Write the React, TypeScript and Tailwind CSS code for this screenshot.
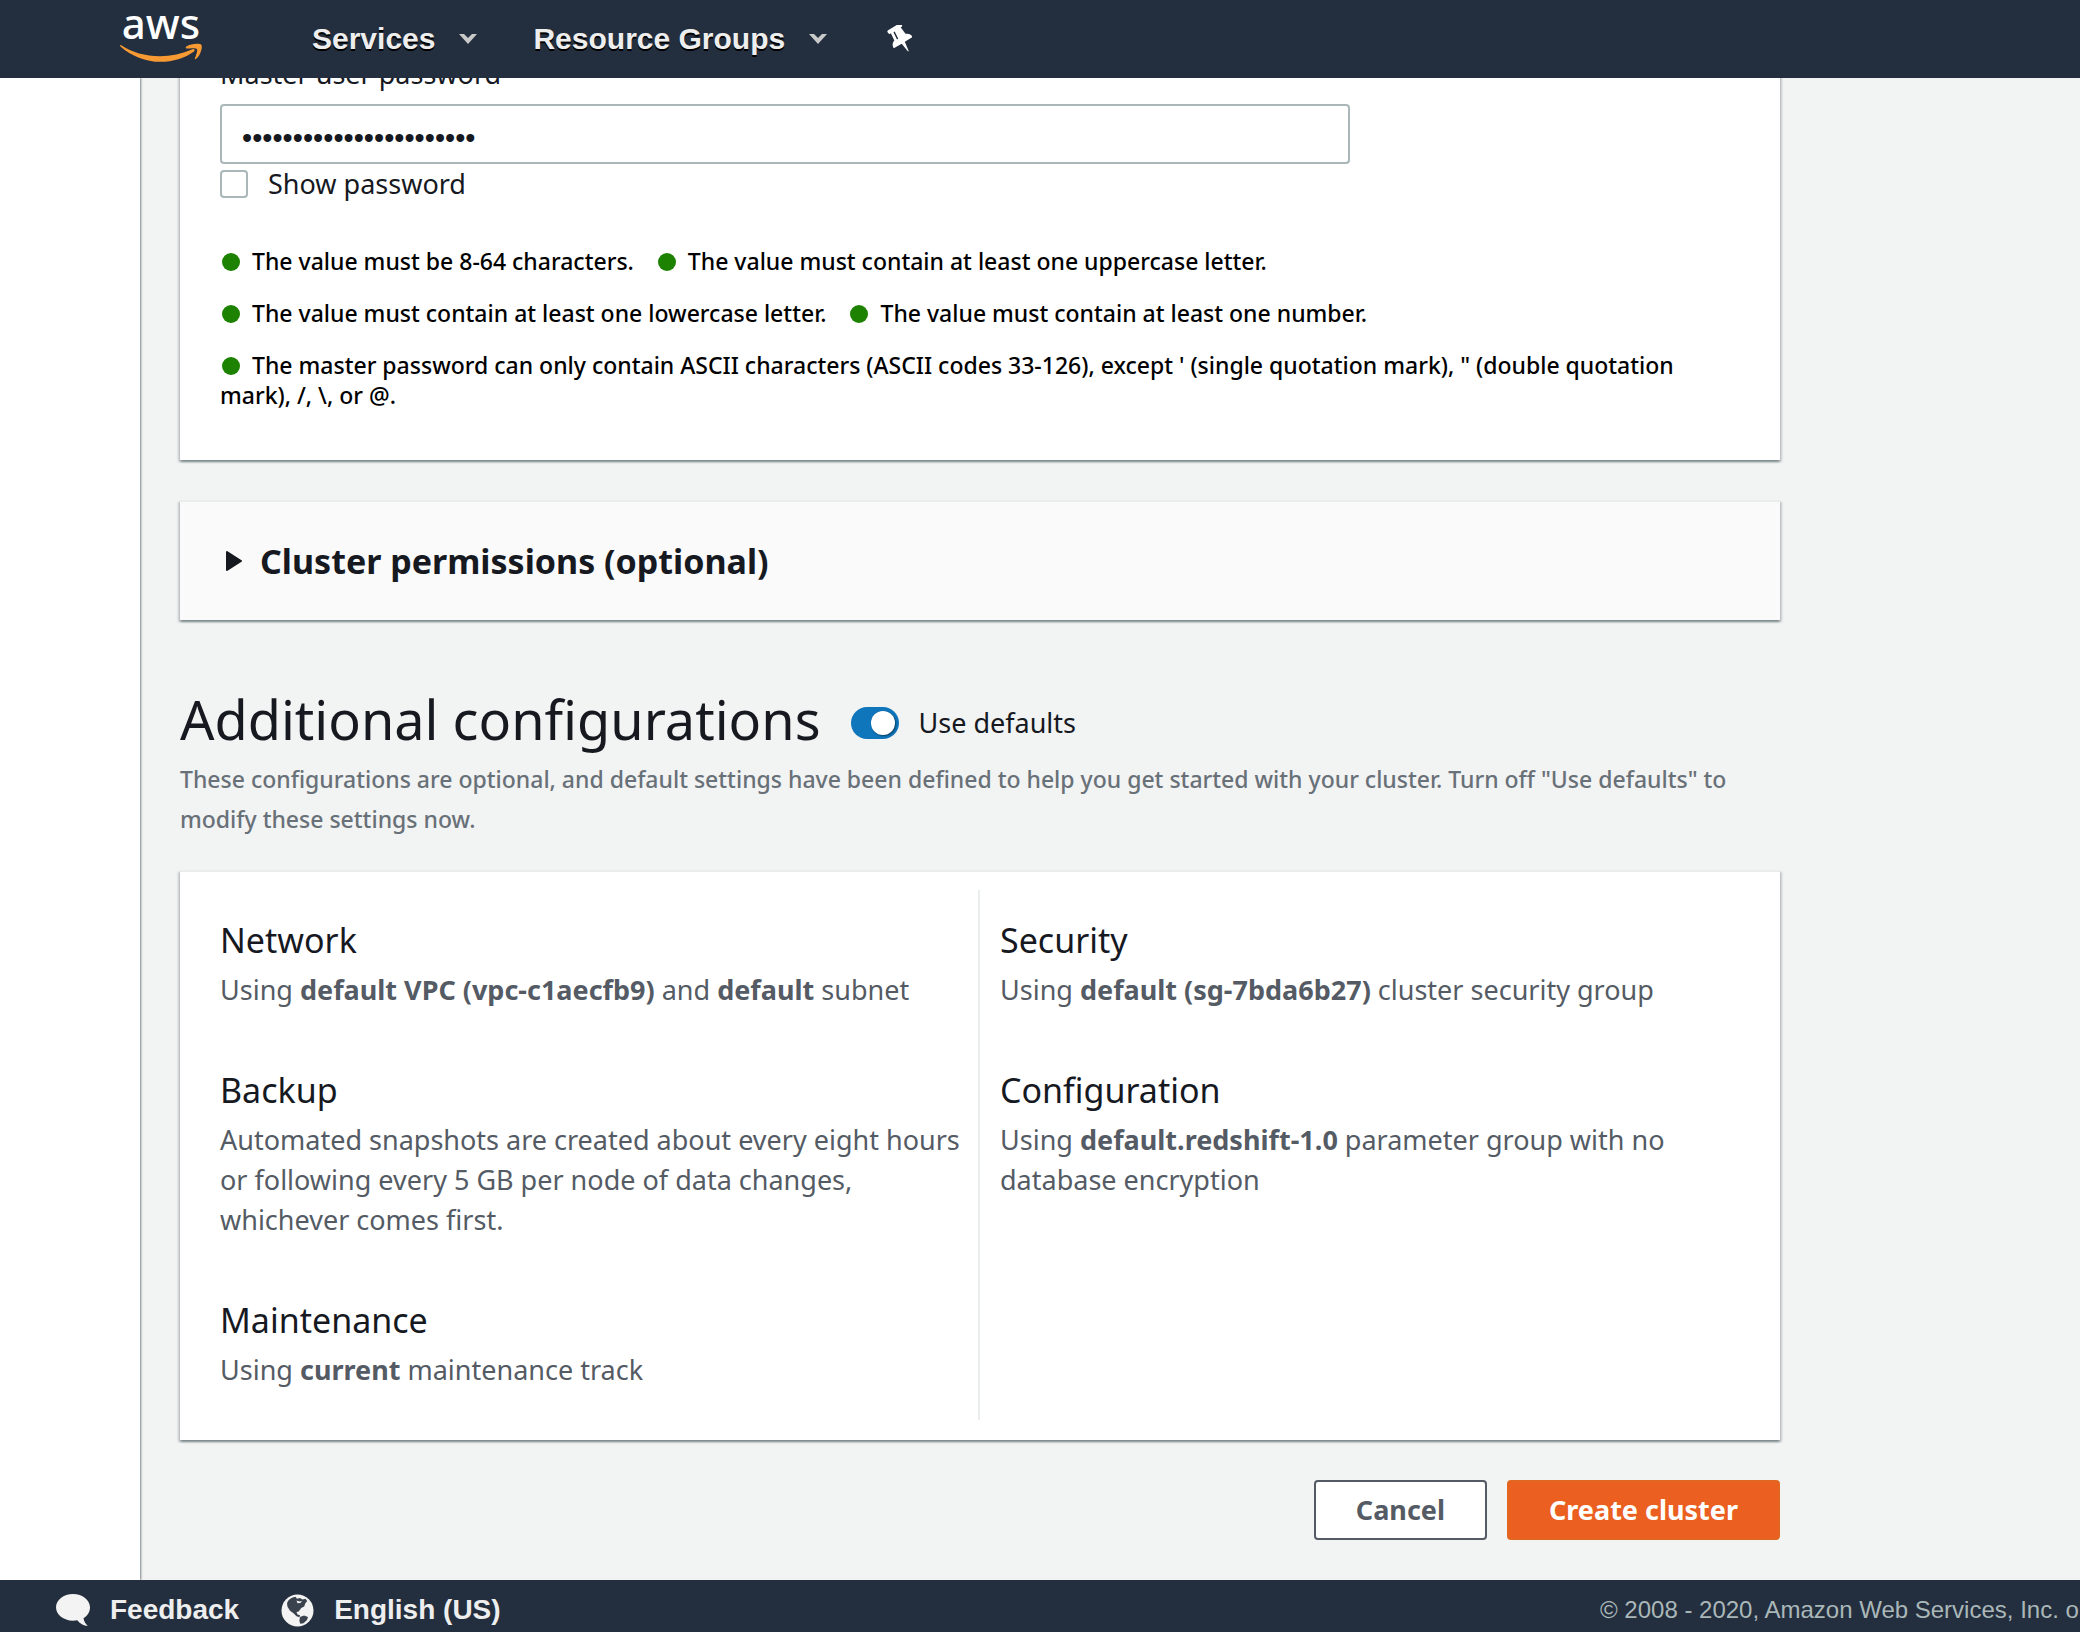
import { useState } from "react";
import type { ReactNode } from "react";

const cardShadow =
  "shadow-[0_2px_2px_0_rgba(0,28,36,0.3),2px_2px_2px_0_rgba(0,28,36,0.15),-2px_2px_2px_0_rgba(0,28,36,0.15)]";

const criteria = [
  "The value must be 8-64 characters.",
  "The value must contain at least one uppercase letter.",
  "The value must contain at least one lowercase letter.",
  "The value must contain at least one number.",
  "The master password can only contain ASCII characters (ASCII codes 33-126), except ' (single quotation mark), \" (double quotation mark), /, \\, or @.",
];

function AwsLogo() {
  return (
    <a href="#home" className="flex w-[82px] flex-col items-center pb-3 font-['Noto_Sans',sans-serif]">
      <span className="text-[42px] leading-10 font-medium text-white">aws</span>
      <svg viewBox="0 0 82 20" className="h-5 w-full" fill="#f79a33" aria-hidden="true">
        <path d="M1.2 2.2C12 9.200 25 13.200 40 13.200c11 0 22-2.600 32.500-7 1.700-.7 3 1 1.500 2.200C65 15 52.500 18.800 40.500 18.800 25.500 18.800 11.500 13 .4 3.400c-.7-.7-.2-1.700.8-1.200z" />
        <path d="M66.300 3.500C70.500.6 79.800.1 81.300 1.800c1.500 2-.5 10-5.200 14-.9.7-1.500.3-1.200-.6 1.200-3 3-7.900 2-9.200-1-1.300-6.400-.7-9.600-.4-1.400.2-2.200-1.200-1-2.100z" />
      </svg>
    </a>
  );
}

function Chevron() {
  return (
    <svg viewBox="0 0 18 10" className="h-2.5 w-[18px]" fill="#c9c9c9" aria-hidden="true">
      <path d="M0 0h5l4 4 4-4h5L9 10z" />
    </svg>
  );
}

function Pin() {
  return (
    <svg viewBox="0 0 25 28" className="h-7 w-[25px]" aria-hidden="true">
      <g transform="translate(8 4) rotate(-31)">
        <path
          fill="#fff"
          d="M-6.500-2.500h13c1 0 1.500.6 1.500 1.500v1c0 1-.5 1.500-1.500 1.500H5.700L6.500 9.500c2.600 1 4.200 2.600 4.500 5.500 0 .6-.3 1-1 1H1.800L.4 26h-.8L-1.800 16H-10c-.7 0-1-.4-1-1 .3-2.900 1.900-4.500 4.500-5.500l.8-8h-.8C-7.500 1.500-8 1-8 0v-1c0-.9.500-1.500 1.500-1.500z"
        />
        <path d="M-2.300 2.500l-.6 7" stroke="#232f3e" strokeWidth="1.400" strokeLinecap="round" />
      </g>
    </svg>
  );
}

function Bubble() {
  return (
    <svg viewBox="0 0 34 33" className="h-[33px] w-[34px]" fill="#f3f3f3" aria-hidden="true">
      <path d="M17 0c9.500 0 17 6 17 13.300 0 4.700-2.700 8.700-6.500 11 .5 3 2 5.700 4.300 7.700-4.300-.3-8-2.300-10.500-5.700-1.400.3-2.800.4-4.300.4C7.500 26.700 0 20.700 0 13.300 0 6 7.500 0 17 0z" />
    </svg>
  );
}

function Globe() {
  return (
    <svg viewBox="0 0 33 33" className="h-[33px] w-[33px]" aria-hidden="true">
      <circle cx="16.500" cy="16.500" r="16" fill="#f3f3f3" />
      <path
        fill="#3a424d"
        d="M7 7c2-2.500 5-4 7.500-4.200l1.500 2 3-.8 2.500 1.500 3-.7 1.700 2.200-2 2.500-1 3-3 1.500-2.500 3.500-2.200.5 1 2.500 2.500.8-.5 2-3-1-3-3-3.500-2.500-2.500-4-.5-3.500z"
      />
      <path fill="#3a424d" d="M19 23l4-1.500 4 1.500-1 3-3.500 3.300-3.300.5-.8-3z" />
      <path fill="#f3f3f3" d="M15.500 6.500l3 1 2.500-.5-1.500 2-3 .3z" />
    </svg>
  );
}

function Summary({ title, children }: { title: string; children: ReactNode }) {
  return (
    <section>
      <h3 className="text-[34px] leading-10 text-[#16191f]">{title}</h3>
      <p className="mt-2.5 leading-10 text-[#545b64]">{children}</p>
    </section>
  );
}

export default function App() {
  const [password, setPassword] = useState("Abcdefgh1234567890Abcde");
  const [show, setShow] = useState(false);
  const [defaults, setDefaults] = useState(true);

  return (
    <div className="flex min-h-screen flex-col overflow-hidden bg-[#f2f3f3] font-['Noto_Sans',sans-serif] text-[27px] text-[#16191f]">
      <header className="z-10 flex h-[78px] shrink-0 items-center bg-[#232f3e] pl-[120px] font-['Liberation_Sans',Arial,sans-serif] text-[30px] font-bold text-[#eee]">
        <AwsLogo />
        <nav className="ml-[110px] flex items-center gap-14">
          <button type="button" className="flex items-center gap-6 leading-10 [text-shadow:0_2px_0_#000]">
            Services
            <Chevron />
          </button>
          <button type="button" className="flex items-center gap-6 leading-10 [text-shadow:0_2px_0_#000]">
            Resource Groups
            <Chevron />
          </button>
          <button type="button" aria-label="Pin shortcuts" className="ml-1">
            <Pin />
          </button>
        </nav>
      </header>

      <div className="flex flex-1 overflow-hidden">
        <aside className="w-[140px] shrink-0 bg-white shadow-[1px_0_2px_0_rgba(0,28,36,0.5)]" />

        <main className="max-w-[1640px] flex-1 pb-10 pl-10">
          <section className={`bg-white px-10 pb-[50px] ${cardShadow}`}>
            <label htmlFor="password" className="-mt-6 block leading-10">
              Master user password
            </label>
            <input
              id="password"
              type={show ? "text" : "password"}
              value={password}
              onChange={(e) => setPassword(e.target.value)}
              className="mt-2.5 block h-[60px] w-full max-w-[1130px] rounded-sm border-2 border-[#aab7b8] bg-white px-5 pt-2 font-['Liberation_Sans',Arial,sans-serif] text-[29px] outline-none"
            />
            <label className="flex w-fit items-center gap-5 leading-10">
              <input
                type="checkbox"
                checked={show}
                onChange={(e) => setShow(e.target.checked)}
                className="size-7 appearance-none rounded-sm border-2 border-[#aab7b8] bg-white checked:bg-[#0073bb]"
              />
              Show password
            </label>
            <ul className="mt-[42px] flex max-w-[1490px] flex-wrap gap-x-[22px] gap-y-[22px] text-[23px] leading-[30px] font-medium text-black">
              {criteria.map((c) => (
                <li key={c}>
                  <span className="mr-3 ml-0.5 inline-block size-[18px] rounded-full bg-[#1d8102] align-[-1px]" />
                  {c}
                </li>
              ))}
            </ul>
          </section>

          <section className={`mt-10 border-t-2 border-[#eaeded] bg-[#fafafa] px-10 py-[39px] ${cardShadow}`}>
            <h2>
              <button type="button" aria-expanded="false" className="flex items-center text-[34px] leading-10 font-bold">
                <svg viewBox="0 0 20 20" className="mr-4 ml-1 size-5" aria-hidden="true">
                  <path d="M3 1l14 9-14 9z" fill="#16191f" stroke="#16191f" strokeWidth="2" strokeLinejoin="round" />
                </svg>
                Cluster permissions (optional)
              </button>
            </h2>
          </section>

          <div className="mt-[65px] flex items-center gap-[30px]">
            <h1 className="text-[54px] leading-[68px]">Additional configurations</h1>
            <label className="flex items-center gap-5 pt-2 leading-10">
              <span className="flex items-center">
                <input
                  type="checkbox"
                  role="switch"
                  checked={defaults}
                  onChange={(e) => setDefaults(e.target.checked)}
                  className="peer sr-only"
                />
                <span className="flex h-8 w-12 items-center rounded-full bg-[#879596] p-1 peer-checked:justify-end peer-checked:bg-[#1076bc]">
                  <span className="size-6 rounded-full bg-white shadow-[1px_1px_2px_0_rgba(0,28,36,0.6)]" />
                </span>
              </span>
              Use defaults
            </label>
          </div>
          <p className="mt-1.5 max-w-[1560px] text-[23px] leading-10 font-medium text-[#687078]">
            These configurations are optional, and default settings have been defined to help you get started with your
            cluster. Turn off "Use defaults" to modify these settings now.
          </p>

          <section className={`mt-[31px] grid grid-cols-2 border-t-2 border-[#eaeded] bg-white pt-[18px] pb-5 ${cardShadow}`}>
            <div className="flex flex-col gap-[60px] border-r-2 border-[#eaeded] py-[30px] pr-4 pl-10">
              <Summary title="Network">
                Using <b>default VPC (vpc-c1aecfb9)</b> and <b>default</b> subnet
              </Summary>
              <Summary title="Backup">
                Automated snapshots are created about every eight hours or following every 5 GB per node of data
                changes, whichever comes first.
              </Summary>
              <Summary title="Maintenance">
                Using <b>current</b> maintenance track
              </Summary>
            </div>
            <div className="flex flex-col gap-[60px] py-[30px] pr-10 pl-5">
              <Summary title="Security">
                Using <b>default (sg-7bda6b27)</b> cluster security group
              </Summary>
              <Summary title="Configuration">
                Using <b>default.redshift-1.0</b> parameter group with no database encryption
              </Summary>
            </div>
          </section>

          <div className="mt-10 flex justify-end gap-5 font-bold">
            <button type="button" className="rounded-sm border-2 border-[#545b64] bg-white px-10 py-2 leading-10 text-[#545b64]">
              Cancel
            </button>
            <button type="button" className="rounded-sm border-2 border-[#e1661f] bg-[#eb5f21] px-10 py-2 leading-10 text-white">
              Create cluster
            </button>
          </div>
        </main>
      </div>

      <footer className="flex h-[52px] shrink-0 items-start justify-between overflow-hidden bg-[#232f3e] pt-2.5 pl-14 font-['Liberation_Sans',Arial,sans-serif] text-[28px] leading-10 font-bold text-[#eee]">
        <div className="flex gap-[42px]">
          <a href="#feedback" className="flex items-center gap-5">
            <Bubble />
            Feedback
          </a>
          <a href="#language" className="flex items-center gap-5">
            <Globe />
            English (US)
          </a>
        </div>
        <p className="w-[480px] overflow-hidden text-2xl leading-10 font-normal whitespace-nowrap text-[#aab7b8]">
          © 2008 - 2020, Amazon Web Services, Inc. or its affiliates.
        </p>
      </footer>
    </div>
  );
}
